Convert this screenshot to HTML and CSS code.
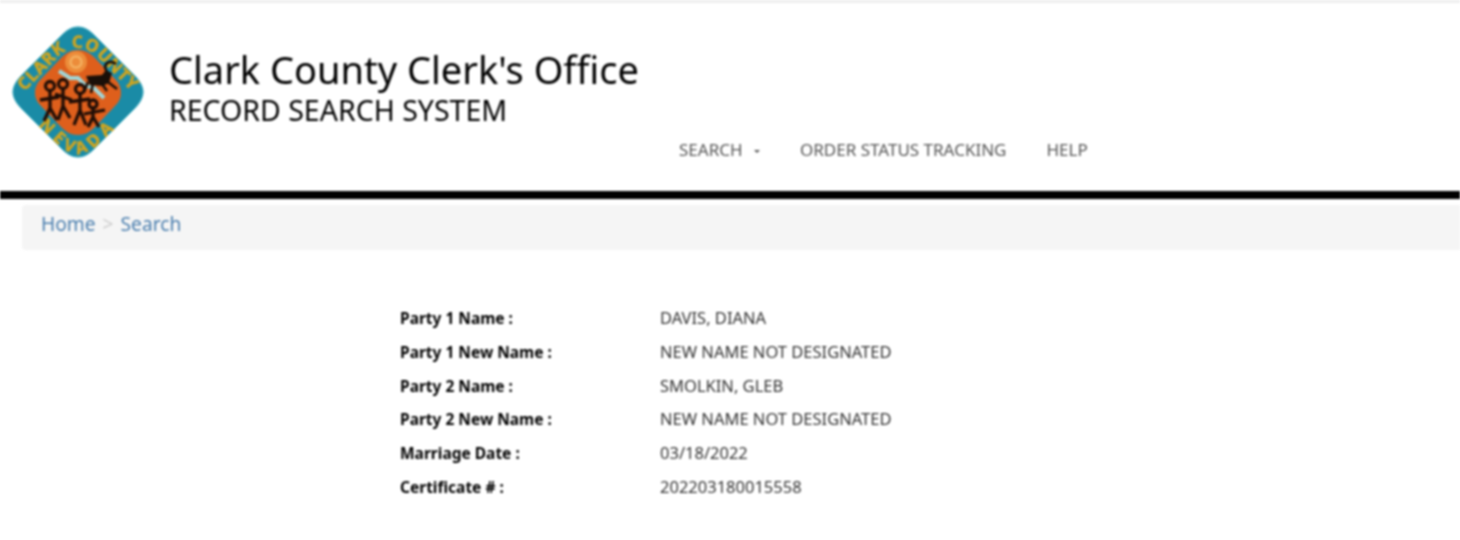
FILE: index.html
```html
<!DOCTYPE html>
<html lang="en">
<head>
<meta charset="utf-8">
<title>Clark County Clerk's Office</title>
<link rel="stylesheet" href="styles.css">
</head>
<body>
<div class="page">
<header class="site-header">
  <svg class="logo" viewBox="0 0 132 132" width="132" height="132" aria-label="Clark County Nevada seal">
    <defs>
      <path id="arc-top" d="M10 68 L49 28 Q66 16 83 28 L122 68"/>
      <path id="arc-bottom" d="M22 96 L50 122 Q66 133 82 122 L110 96"/>
    </defs>
    <path class="seal-outer" d="M66 1 C72 1 77 4 82 9 L122 49 C127 54 131 60 131 66 C131 72 127 78 122 83 L82 123 C77 128 72 131 66 131 C60 131 55 128 50 123 L10 83 C5 78 1 72 1 66 C1 60 5 54 10 49 L50 9 C55 4 60 1 66 1 Z"/>
    <path class="seal-inner" d="M66 24 C73 24 78 27 83 32 L102 52 C107 57 109 61 109 67 C109 73 106 77 102 81 L83 101 C78 106 73 109 66 109 C59 109 54 106 49 101 L30 81 C26 77 23 73 23 67 C23 61 25 57 30 52 L49 32 C54 27 59 24 66 24 Z"/>
    <text class="seal-text seal-text-high"><textPath href="#arc-top" startOffset="50%" text-anchor="middle">CLARK COUNTY</textPath></text>
    <text class="seal-text seal-text-low"><textPath href="#arc-bottom" startOffset="50%" text-anchor="middle">NEVADA</textPath></text>
    <circle class="seal-sun" cx="64" cy="36" r="11"/>
    <circle class="seal-sun-core" cx="64" cy="36" r="5.5"/>
    <path class="seal-river" d="M47 45 L58 52 L66 52 L74 60 L82 62 L92 72"/>
    <g class="seal-figures">
      <circle cx="38" cy="60" r="4.5"/><path d="M38 65 V82 M28 74 L47 71 M38 82 L32 95 M38 82 L45 94"/>
      <circle cx="51" cy="58" r="4.5"/><path d="M51 63 V80 M43 68 L60 74 M51 80 L46 94 M51 80 L58 92"/>
      <circle cx="68" cy="63" r="4.5"/><path d="M68 68 V84 M57 76 L78 73 M68 84 L62 99 M68 84 L74 99"/>
      <circle cx="81" cy="78" r="4"/><path d="M81 82 V91 M72 88 L93 84 M81 91 L76 101 M81 91 L87 101"/>
    </g>
    <path class="seal-animal-body" d="M74 50 L90 49 L94 44 L100 47 L97 57 L90 60 L78 59 Z"/>
    <path class="seal-animal" d="M76 56 L72 66 M81 57 L79 67 M90 58 L95 65 M96 56 L105 63 M95 46 C90 38 97 33 104 38"/>
  </svg>
  <div class="header-main">
    <div class="brand">
      <h1 class="brand-title">Clark County Clerk's Office</h1>
      <p class="brand-sub">RECORD SEARCH SYSTEM</p>
    </div>
    <nav class="main-nav">
      <a href="#">SEARCH <span class="caret"></span></a>
      <a href="#">ORDER STATUS TRACKING</a>
      <a href="#">HELP</a>
    </nav>
  </div>
</header>
<div class="breadcrumb"><a href="#">Home</a><span class="sep">&gt;</span><a href="#">Search</a></div>
<dl class="details">
  <dt>Party 1 Name :</dt><dd>DAVIS, DIANA</dd>
  <dt>Party 1 New Name :</dt><dd>NEW NAME NOT DESIGNATED</dd>
  <dt>Party 2 Name :</dt><dd>SMOLKIN, GLEB</dd>
  <dt>Party 2 New Name :</dt><dd>NEW NAME NOT DESIGNATED</dd>
  <dt>Marriage Date :</dt><dd>03/18/2022</dd>
  <dt>Certificate # :</dt><dd>202203180015558</dd>
</dl>
</div>
</body>
</html>
```
FILE: styles.css
```css
html, body { margin: 0; padding: 0; background: #fff; }
body {
  font-family: "Noto Sans", "Open Sans", sans-serif;
  color: #333;
  overflow: hidden;
}
.page {
  height: 540px;
  border-top: 3px solid #eeeeee;
  box-sizing: border-box;
  filter: blur(0.8px);
}
.site-header {
  display: flex;
  align-items: flex-start;
  height: 188px;
  padding-left: 12px;
  border-bottom: 8px solid #000;
}
.logo { margin-top: 23px; flex: none; overflow: visible; }
.header-main { margin-left: 25px; display: flex; flex-direction: column; }
.brand { margin-top: 42px; }
.brand-title {
  margin: 0;
  font-size: 38px;
  line-height: 48px;
  font-weight: 400;
  color: #000;
}
.brand-sub {
  margin: 0;
  font-size: 28.5px;
  line-height: 34px;
  color: #000;
}
.main-nav {
  display: flex;
  gap: 40px;
  margin-top: 13px;
  margin-left: 510px;
  font-size: 17px;
  line-height: 20px;
  white-space: nowrap;
}
.main-nav a { color: #555; text-decoration: none; }
.caret {
  display: inline-block;
  width: 0; height: 0;
  margin-left: 7px;
  vertical-align: middle;
  border-top: 3px solid #555;
  border-left: 3px solid transparent;
  border-right: 3px solid transparent;
}
.breadcrumb {
  margin: 6px 0 0 22px;
  height: 45px;
  line-height: 38px;
  padding-left: 19px;
  background: #f5f5f5;
  border-radius: 4px 0 0 4px;
  font-size: 19.2px;
}
.breadcrumb a { color: #4a7eae; text-decoration: none; }
.sep { color: #ccc; margin: 0 7px; }
.details {
  display: grid;
  grid-template-columns: 260px auto;
  justify-content: start;
  align-items: baseline;
  margin: 51px 0 0 400px;
  font-size: 15.5px;
  grid-auto-rows: 33.8px;
  line-height: 33.8px;
}
.details dt { font-weight: 700; color: #000; }
.details dd { margin: 0; color: #333; font-size: 16.5px; }
.seal-outer { fill: #1a8ba6; stroke: #23a0b8; stroke-width: 1; }
.seal-inner { fill: #de5f1c; }
.seal-text { font-family: "Noto Sans", sans-serif; font-size: 17px; font-weight: 700; fill: #d2a51e; stroke: #d2a51e; stroke-width: 0.5; }
.seal-text-high { letter-spacing: 0.9px; }
.seal-text-low { letter-spacing: 5px; }
.seal-sun { fill: #ec8c3a; }
.seal-sun-core { fill: none; stroke: #f4b060; stroke-width: 2.5; }
.seal-river { fill: none; stroke: #9fd6d8; stroke-width: 4; }
.seal-figures { fill: none; stroke: #1f0d06; stroke-width: 3.3; }
.seal-animal-body { fill: #1a0f08; }
.seal-animal { fill: none; stroke: #1a0f08; stroke-width: 2.6; }
```
